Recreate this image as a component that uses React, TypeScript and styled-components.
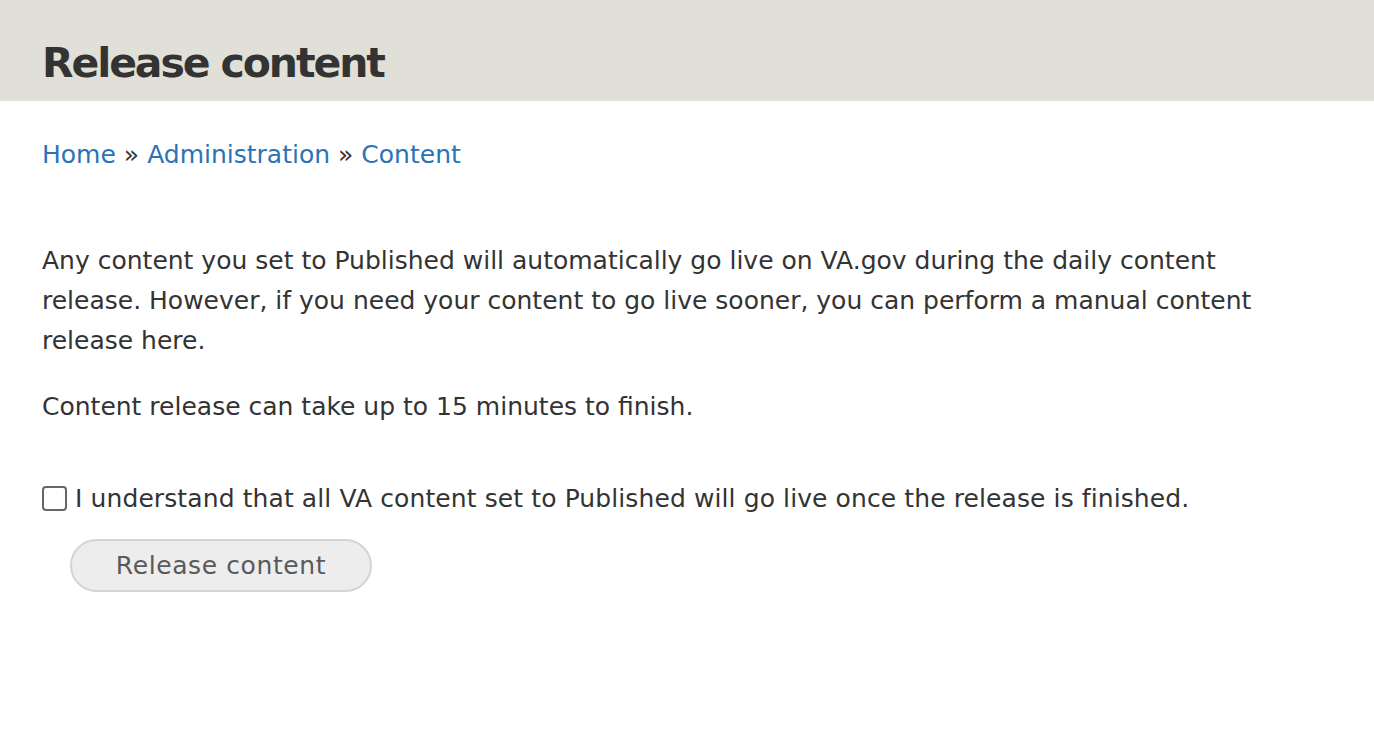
import styled, { createGlobalStyle } from "styled-components";

const GlobalStyle = createGlobalStyle`
  body {
    margin: 0;
    background: #fff;
    font-family: "DejaVu Sans", Verdana, sans-serif;
    color: #333;
  }
`;

const Header = styled.header`
  background-color: #e0e0d8;
  height: 101px;
  padding: 43px 42px 0;
  box-sizing: border-box;
`;

const Title = styled.h1`
  margin: 0;
  font-size: 41px;
  line-height: 1;
  font-weight: bold;
  color: #333;
  letter-spacing: -2.1px;
`;

const Main = styled.main`
  padding: 0 42px;
`;

const Breadcrumb = styled.nav`
  margin-top: 38px;
  font-size: 25px;
  line-height: 32px;
  color: #333;
`;

const Crumb = styled.a`
  color: #2a73b8;
  text-decoration: none;
`;

const Sep = styled.span`
  margin: 0 8px;
`;

const Intro = styled.div`
  margin-top: 70px;
  font-size: 25px;
  line-height: 40px;
  max-width: 1215px;
`;

const Para = styled.p`
  margin: 0 0 26px;
`;

const CheckRow = styled.label`
  display: flex;
  align-items: center;
  gap: 8px;
  margin-top: 57px;
  font-size: 25px;
  letter-spacing: 0.1px;
`;

const Box = styled.input`
  appearance: none;
  flex: none;
  width: 25px;
  height: 25px;
  margin: 0;
  border: 2px solid #666;
  border-radius: 4px;
  background: #fff;
`;

const ReleaseButton = styled.button`
  margin: 26px 0 0 28px;
  width: 302px;
  height: 53px;
  border-radius: 27px;
  border: 2px solid #d4d4d4;
  background: #ededed;
  color: #5a5a5a;
  font-family: "DejaVu Sans", Verdana, sans-serif;
  font-size: 25px;
  letter-spacing: 0.6px;
`;

export default function App() {
  return (
    <>
      <GlobalStyle />
      <Header>
        <Title>Release content</Title>
      </Header>
      <Main>
        <Breadcrumb>
          <Crumb href="#">Home</Crumb>
          <Sep>»</Sep>
          <Crumb href="#">Administration</Crumb>
          <Sep>»</Sep>
          <Crumb href="#">Content</Crumb>
        </Breadcrumb>
        <Intro>
          <Para>
            Any content you set to Published will automatically go live on VA.gov during the daily content
            release. However, if you need your content to go live sooner, you can perform a manual content
            release here.
          </Para>
          <Para>Content release can take up to 15 minutes to finish.</Para>
        </Intro>
        <CheckRow>
          <Box type="checkbox" />
          I understand that all VA content set to Published will go live once the release is finished.
        </CheckRow>
        <ReleaseButton disabled>Release content</ReleaseButton>
      </Main>
    </>
  );
}
